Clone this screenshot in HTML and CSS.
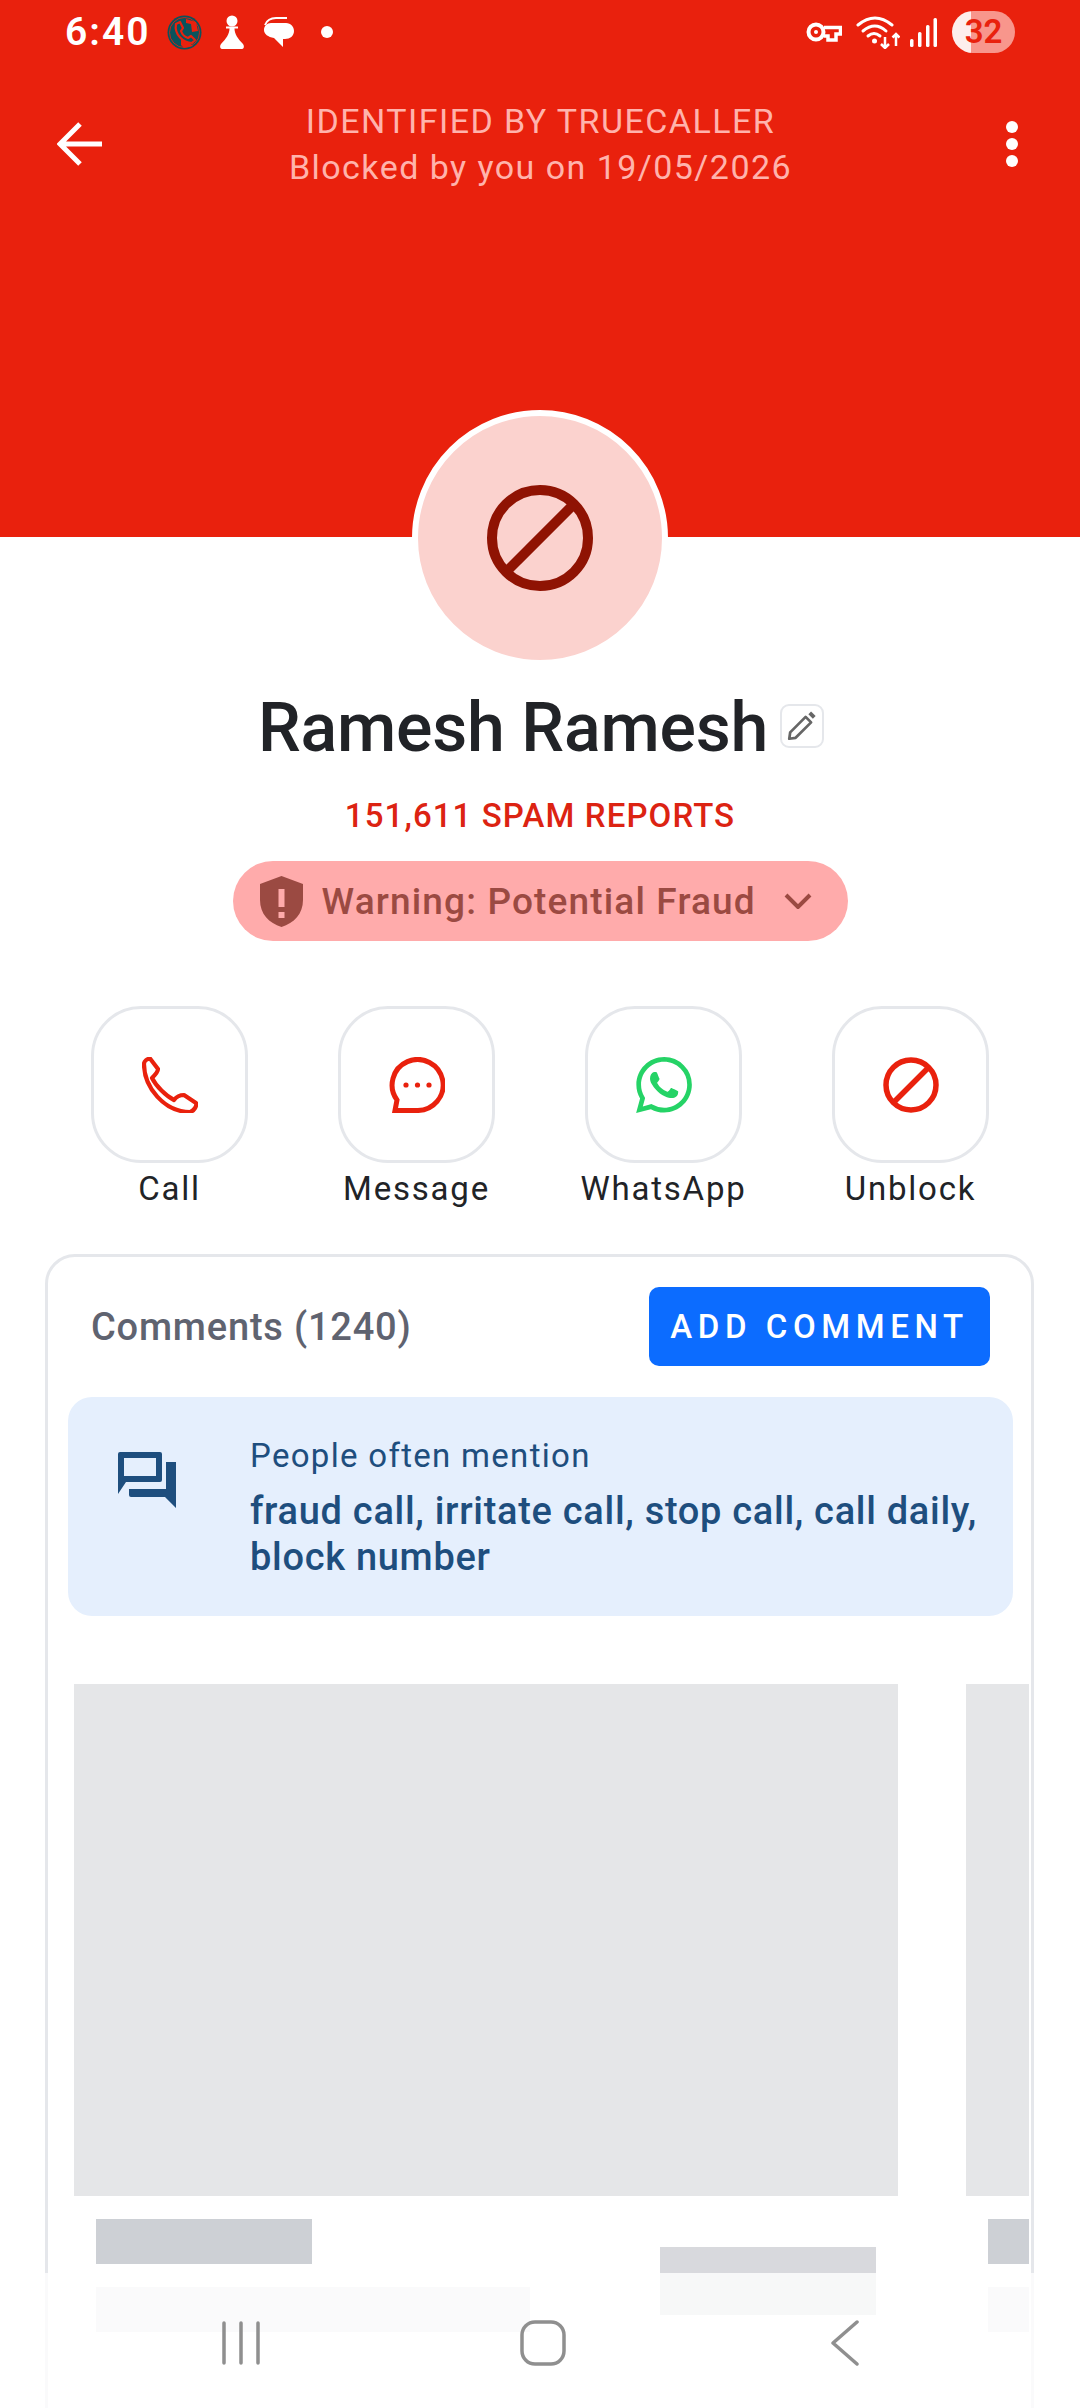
FILE: index.html
```html
<!DOCTYPE html>
<html lang="en">
<head>
  <meta charset="UTF-8" />
  <meta name="viewport" content="width=device-width, initial-scale=1.0"/>
  <title>Ramesh Ramesh</title>
  <link rel="stylesheet" href="styles.css">
</head>
<body>
  <div class="screen">
    <header class="hero">
      <div class="status">
        <span class="time">6:40</span>
        <svg class="st-caller" viewBox="0 0 35 35">
          <circle cx="17.5" cy="17.5" r="17" fill="#0a535c"/>
          <circle cx="17.5" cy="17.5" r="15" fill="none" stroke="#e9210d" stroke-width="0.8"/>
          <path d="M19 4l10 3 2 9-6 1-1-8-5-1zM14 24l10 5 2 2-9 2-3-3z" fill="#e9210d"/>
          <path d="M9 9l4-2 3 6-2 3c1 3 4 6 7 7l3-2 4 4-3 3C16 28 7 19 9 9z" fill="none" stroke="#e9210d" stroke-width="2.2" stroke-linejoin="round"/>
        </svg>
        <svg class="st-pawn" viewBox="0 0 24 34">
          <circle cx="12" cy="6" r="5.5" fill="#fff"/>
          <path d="M6 11.5h12v2h-3.500C14.500 19 18 24 23 29c1.500 2 1 5-1 5H2c-2 0-2.500-3-1-5 5-5 8.500-10 8.500-15.500H6z" fill="#fff"/>
        </svg>
        <svg class="st-chat" viewBox="0 0 31 31">
          <path d="M8 6h15c5 0 8 4 8 8 0 5-4 8-9 8h-2v8l-9-9c-6-1-10-4-10-8 0-4 3-7 7-7z" fill="#fff"/>
          <path d="M2 8c2-5 6-7 11-7h11" fill="none" stroke="#fff" stroke-width="2"/>
        </svg>
        <span class="st-dot"></span>
        <div class="status-right">
          <svg class="st-key" viewBox="0 0 36 20">
            <circle cx="10" cy="10" r="7.500" fill="none" stroke="#fff" stroke-width="4"/>
            <circle cx="10" cy="10" r="2" fill="#fff"/>
            <path d="M18 5.500h16.500V12H30v6h-8v-4h-4" fill="none" stroke="#fff" stroke-width="3.500"/>
          </svg>
          <svg class="st-wifi" viewBox="0 0 44 33">
            <g fill="none" stroke="#fff" stroke-width="3" stroke-linecap="round">
              <path d="M2 9Q19-5 36 9"/>
              <path d="M7 15Q19 5 30 15"/>
              <path d="M12 20Q18 15 24 20"/>
            </g>
            <circle cx="18.500" cy="25" r="2.500" fill="#fff"/>
            <g fill="none" stroke="#fff" stroke-width="2.500">
              <path d="M29 21v11M25 28l4 4 4-4"/>
              <path d="M40 30V18M36.500 21.500l3.500-3.500 3.500 3.500"/>
            </g>
          </svg>
          <svg class="st-signal" viewBox="0 0 27 29">
            <rect x="0" y="21" width="3.500" height="8" rx="1.500" fill="#fff"/>
            <rect x="8" y="14" width="3.500" height="15" rx="1.500" fill="#fff"/>
            <rect x="16" y="7" width="3.500" height="22" rx="1.500" fill="#fff"/>
            <rect x="23.500" y="0" width="3.500" height="29" rx="1.500" fill="#fff"/>
          </svg>
          <span class="battery">32</span>
        </div>
      </div>
      <div class="toolbar">
        <svg class="back" viewBox="0 0 46 44">
          <path d="M45 22H4M23 2L3 22l20 20" fill="none" stroke="#fff" stroke-width="5"/>
        </svg>
        <div class="toolbar-title">
          <div>IDENTIFIED BY TRUECALLER</div>
          <div>Blocked by you on 19/05/2026</div>
        </div>
        <div class="more"><i></i><i></i><i></i></div>
      </div>
    </header>

    <div class="avatar">
      <svg viewBox="0 0 108 108">
        <circle cx="54" cy="54" r="48" fill="none" stroke="#8f1303" stroke-width="10"/>
        <path d="M88 20L20 88" stroke="#8f1303" stroke-width="10"/>
      </svg>
    </div>

    <div class="name-row">
      <h1>Ramesh Ramesh</h1>
      <span class="edit">
        <svg viewBox="0 0 44 44">
          <path d="M8 36l1-7 17-17 6 6-17 17z" fill="none" stroke="#666" stroke-width="3" stroke-linejoin="round"/>
          <path d="M29 9l3-3 5 5-3 3z" fill="#666"/>
        </svg>
      </span>
    </div>
    <div class="spam">151,611 SPAM REPORTS</div>
    <div class="warning">
      <svg class="shield" viewBox="0 0 43 51">
        <path fill-rule="evenodd" d="M21.500 0L43 8v16c0 14-9 23-21.500 27C9 47 0 38 0 24V8zM18.500 13v18h6V13zM18.500 36v6h6v-6z" fill="#9b4a42"/>
      </svg>
      <span>Warning: Potential Fraud</span>
      <svg class="chevron" viewBox="0 0 28 16">
        <path d="M2 2l12 12L26 2" fill="none" stroke="#9b4a42" stroke-width="4"/>
      </svg>
    </div>

    <div class="actions">
      <div class="action">
        <div class="action-box">
          <svg viewBox="0 0 56 56">
            <path d="M2 7c0-3 3-5 6-5.500L16 12c0 3-4 7-6 9 4 8 14 18 22 22 3-4 7-5 10-5l12 8c1 3-2 8-6 9C22 55 2 30 2 7z" fill="none" stroke="#e9210d" stroke-width="4.200" stroke-linejoin="round"/>
          </svg>
        </div>
        <span>Call</span>
      </div>
      <div class="action">
        <div class="action-box">
          <svg viewBox="0 0 56 56">
            <path d="M8 43A25.500 25.500 0 1 1 28 53.500H6z" fill="none" stroke="#e9210d" stroke-width="5"/>
            <circle cx="17" cy="28" r="2.600" fill="#e9210d"/>
            <circle cx="28.500" cy="28" r="2.600" fill="#e9210d"/>
            <circle cx="40" cy="28" r="2.600" fill="#e9210d"/>
          </svg>
        </div>
        <span>Message</span>
      </div>
      <div class="action">
        <div class="action-box">
          <svg viewBox="0 0 24 24">
            <path fill="#25d366" d="M17.472 14.382c-.297-.149-1.758-.867-2.030-.967-.273-.099-.471-.148-.670.150-.197.297-.767.966-.940 1.164-.173.199-.347.223-.644.075-.297-.150-1.255-.463-2.390-1.475-.883-.788-1.480-1.761-1.653-2.059-.173-.297-.018-.458.130-.606.134-.133.298-.347.446-.520.149-.174.198-.298.298-.497.099-.198.050-.371-.025-.520-.075-.149-.669-1.612-.916-2.207-.242-.579-.487-.500-.669-.510-.173-.008-.371-.010-.570-.010-.198 0-.520.074-.792.372-.272.297-1.040 1.016-1.040 2.479 0 1.462 1.065 2.875 1.213 3.074.149.198 2.096 3.200 5.077 4.487.709.306 1.262.489 1.694.625.712.227 1.360.195 1.871.118.571-.085 1.758-.719 2.006-1.413.248-.694.248-1.289.173-1.413-.074-.124-.272-.198-.570-.347m-5.421 7.403h-.004a9.870 9.870 0 01-5.031-1.378l-.361-.214-3.741.982.998-3.648-.235-.374a9.860 9.860 0 01-1.510-5.260c.001-5.450 4.436-9.884 9.888-9.884 2.640 0 5.122 1.030 6.988 2.898a9.825 9.825 0 012.893 6.994c-.003 5.450-4.437 9.884-9.885 9.884m8.413-18.297A11.815 11.815 0 0012.050 0C5.495 0 .160 5.335.157 11.892c0 2.096.547 4.142 1.588 5.945L.057 24l6.305-1.654a11.882 11.882 0 005.683 1.448h.005c6.554 0 11.890-5.335 11.893-11.893a11.821 11.821 0 00-3.480-8.413z"/>
          </svg>
        </div>
        <span>WhatsApp</span>
      </div>
      <div class="action">
        <div class="action-box">
          <svg viewBox="0 0 56 56">
            <circle cx="28" cy="28" r="25" fill="none" stroke="#e9210d" stroke-width="5.500"/>
            <path d="M46 10L10 46" stroke="#e9210d" stroke-width="5.500"/>
          </svg>
        </div>
        <span>Unblock</span>
      </div>
    </div>

    <section class="card">
      <div class="card-head">
        <span class="card-title">Comments (1240)</span>
        <span class="add-btn">ADD COMMENT</span>
      </div>
      <div class="mention">
        <svg class="mention-icon" viewBox="0 0 58 56">
          <path fill-rule="evenodd" d="M2 0h40a2 2 0 0 1 2 2v26a2 2 0 0 1-2 2H8L0 42V2a2 2 0 0 1 2-2zM6 6v18h32V6z" fill="#1e4e7e"/>
          <path d="M48 10h10v46L47 45H13a2 2 0 0 1-2-2v-6h37z" fill="#1e4e7e"/>
        </svg>
        <div class="mention-text">
          <div class="mention-label">People often mention</div>
          <div class="mention-words">fraud call, irritate call, stop call, call daily, block number</div>
        </div>
      </div>
      <div class="slides">
        <div class="slide">
          <div class="slide-img"></div>
          <div class="slide-meta">
            <div>
              <div class="bar bar-title"></div>
              <div class="bar bar-sub"></div>
            </div>
            <div class="bar bar-side"></div>
          </div>
        </div>
        <div class="slide">
          <div class="slide-img"></div>
          <div class="slide-meta">
            <div>
              <div class="bar bar-title"></div>
              <div class="bar bar-sub"></div>
            </div>
          </div>
        </div>
      </div>
    </section>

    <!-- navigation bar lies over the page -->
    <nav class="navbar">
      <div class="nav-item">
        <svg class="nav-recents" viewBox="0 0 38 44">
          <path d="M2 2v40M19 2v40M36 2v40" fill="none" stroke="#8f8f8f" stroke-width="3.500" stroke-linecap="round"/>
        </svg>
      </div>
      <div class="nav-item">
        <svg class="nav-home" viewBox="0 0 46 46">
          <rect x="2" y="2" width="42" height="42" rx="13" fill="none" stroke="#8f8f8f" stroke-width="3.500"/>
        </svg>
      </div>
      <div class="nav-item">
        <svg class="nav-back" viewBox="0 0 30 46">
          <path d="M27 2L3 23l24 21" fill="none" stroke="#8f8f8f" stroke-width="3.500" stroke-linecap="round" stroke-linejoin="round"/>
        </svg>
      </div>
    </nav>
  </div>
</body>
</html>
```

FILE: styles.css
```css
* {
  box-sizing: border-box;
}

html, body {
  margin: 0;
  padding: 0;
  background-color: #fff;
}

body {
  font-family: Roboto, "Liberation Sans", sans-serif;
  color: #212327;
}

.screen {
  position: relative;
  width: 1080px;
  height: 2408px;
  overflow: hidden;
}

/* red header */
.hero {
  height: 537px;
  background-color: #e9210d;
  color: #fff;
}

.status {
  display: flex;
  align-items: center;
  height: 64px;
  padding: 0 65px;
}

.time {
  font-size: 39px;
  font-weight: 600;
  letter-spacing: 2px;
  width: 84px;
  white-space: nowrap;
}

.status svg {
  display: block;
  flex: none;
}

.st-caller {
  width: 35px;
  height: 35px;
  margin-left: 18px;
}

.st-pawn {
  width: 24px;
  height: 34px;
  margin-left: 18px;
}

.st-chat {
  width: 31px;
  height: 31px;
  margin-left: 19px;
}

.st-dot {
  width: 12px;
  height: 12px;
  margin-left: 27px;
  border-radius: 50%;
  background-color: #fff;
}

.status-right {
  display: flex;
  align-items: center;
  margin-left: auto;
}

.st-key {
  width: 36px;
  height: 20px;
}

.st-wifi {
  width: 44px;
  height: 33px;
  margin-left: 14px;
}

.st-signal {
  width: 27px;
  height: 29px;
  margin-left: 10px;
}

.battery {
  width: 63px;
  height: 42px;
  margin-left: 15px;
  border-radius: 21px;
  background: linear-gradient(to right, #fdeeec 19px, #f8968c 19px);
  color: #e9210d;
  font-size: 33px;
  font-weight: 600;
  line-height: 42px;
  text-align: center;
}

.toolbar {
  display: flex;
  align-items: center;
  height: 88px;
  margin-top: 36px;
  padding: 0 45px 0 57px;
}

.back {
  width: 46px;
  height: 44px;
  flex: none;
}

.toolbar-title {
  flex: 1;
  margin-right: 11px;
  color: #ffb3ac;
  font-size: 34px;
  line-height: 46px;
  letter-spacing: 1.45px;
  text-align: center;
  white-space: nowrap;
}

.more {
  display: flex;
  flex-direction: column;
  align-items: center;
  gap: 5px;
  width: 46px;
}

.more i {
  display: block;
  width: 12px;
  height: 12px;
  border-radius: 50%;
  background-color: #fff;
}

/* avatar sits half over the header */
.avatar {
  display: flex;
  align-items: center;
  justify-content: center;
  width: 256px;
  height: 256px;
  margin: -127px auto 0;
  border: 6px solid #fff;
  border-radius: 50%;
  background-color: #fbd2ce;
}

.avatar svg {
  width: 108px;
  height: 108px;
}

.name-row {
  display: flex;
  align-items: center;
  justify-content: center;
  gap: 12px;
  margin-top: 22px;
  padding-left: 2px;
}

.name-row h1 {
  margin: 0;
  font-size: 68px;
  font-weight: 500;
  letter-spacing: -0.2px;
  line-height: 80px;
  white-space: nowrap;
}

.edit {
  width: 44px;
  height: 44px;
  border: 2px solid #e5e7eb;
  border-radius: 9px;
  margin-top: -4px;
}

.edit svg {
  display: block;
  width: 40px;
  height: 40px;
}

.spam {
  margin-top: 26px;
  color: #dc2312;
  font-size: 33px;
  font-weight: 500;
  letter-spacing: 1.1px;
  line-height: 44px;
  text-align: center;
}

.warning {
  display: flex;
  align-items: center;
  width: 615px;
  height: 80px;
  margin: 23px auto 0;
  padding: 0 36px 0 27px;
  border-radius: 40px;
  background-color: #ffabab;
  color: #9b4a42;
  font-size: 37px;
  font-weight: 500;
  letter-spacing: 1.15px;
  white-space: nowrap;
}

.shield {
  width: 43px;
  height: 51px;
  flex: none;
}

.warning span {
  margin-left: 19px;
}

.chevron {
  width: 28px;
  height: 16px;
  margin-left: auto;
}

.actions {
  display: flex;
  margin-top: 65px;
  padding: 0 46px;
}

.action {
  flex: 1;
  display: flex;
  flex-direction: column;
  align-items: center;
  font-size: 33px;
  letter-spacing: 1.8px;
  line-height: 44px;
}

.action-box {
  display: flex;
  align-items: center;
  justify-content: center;
  width: 157px;
  height: 157px;
  margin-bottom: 4px;
  border: 3px solid #e5e7eb;
  border-radius: 50px;
}

.action-box svg {
  width: 56px;
  height: 56px;
}

/* comments card, runs off the bottom of the screen */
.card {
  width: 989px;
  margin: 43px 0 0 45px;
  padding: 30px 0 140px;
  border: 3px solid #e5e7eb;
  border-radius: 30px;
}

.card-head {
  display: flex;
  align-items: center;
  justify-content: space-between;
  padding: 0 41px 0 43px;
}

.card-title {
  color: #5f6370;
  font-size: 38px;
  font-weight: 500;
  letter-spacing: 0.8px;
}

.add-btn {
  display: flex;
  align-items: center;
  justify-content: center;
  width: 341px;
  height: 79px;
  border-radius: 10px;
  background-color: #0c6cff;
  color: #fff;
  font-size: 33px;
  font-weight: 500;
  letter-spacing: 5.6px;
}

.mention {
  display: flex;
  height: 219px;
  margin: 31px 18px 0 20px;
  padding: 39px 0 0 50px;
  border-radius: 24px;
  background-color: #e5effd;
  color: #1e4e7e;
}

.mention-icon {
  width: 58px;
  height: 56px;
  margin-top: 16px;
  flex: none;
}

.mention-text {
  margin-left: 74px;
  margin-right: 10px;
}

.mention-label {
  font-size: 33px;
  letter-spacing: 1.3px;
  line-height: 40px;
}

.mention-words {
  margin-top: 12px;
  font-size: 38px;
  font-weight: 500;
  letter-spacing: 0.7px;
  line-height: 46px;
}

.slides {
  display: flex;
  gap: 68px;
  margin: 68px 2px 0 26px;
  overflow: hidden;
}

.slide {
  flex: none;
  width: 824px;
}

.slide-img {
  height: 512px;
  background-color: #e5e6e8;
}

.slide-meta {
  display: flex;
  justify-content: space-between;
  padding: 0 22px;
}

.bar {
  height: 45px;
  margin-top: 23px;
}

.bar-title {
  width: 216px;
  background-color: #cdd0d5;
}

.bar-sub {
  width: 434px;
  background-color: #e5e6e8;
}

.bar-side {
  width: 216px;
  height: 68px;
  margin-top: 51px;
  background-color: #d8d9dd;
}

.navbar {
  position: absolute;
  left: 0;
  right: 0;
  top: 2273px;
  bottom: 0;
  display: flex;
  padding: 47px 0 0 90px;
  background-color: rgba(255, 255, 255, 0.8);
}

.nav-item {
  display: flex;
  justify-content: center;
  align-items: center;
  width: 302px;
  height: 46px;
}

.nav-recents {
  width: 38px;
  height: 44px;
}

.nav-home {
  width: 46px;
  height: 46px;
}

.nav-back {
  width: 30px;
  height: 46px;
}
```
